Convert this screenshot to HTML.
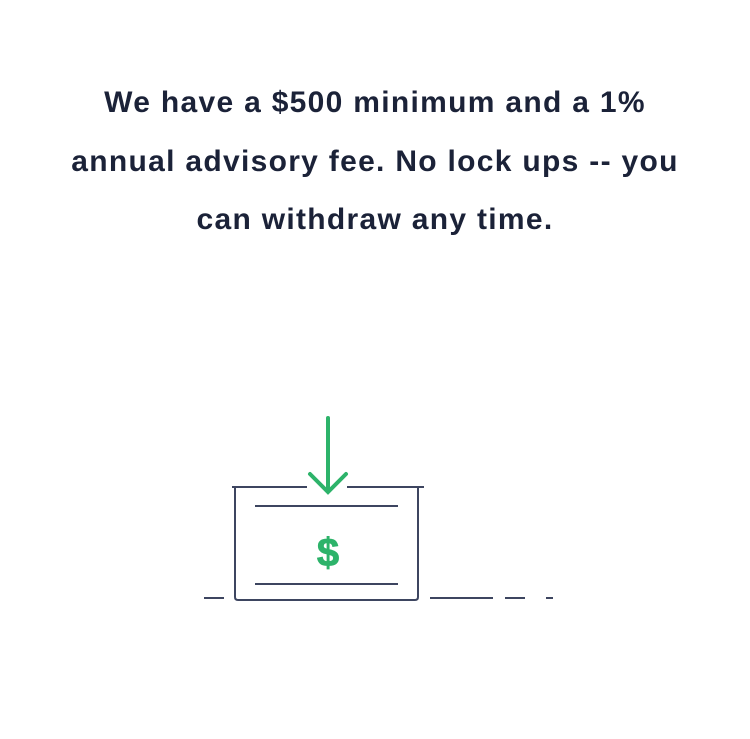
<!DOCTYPE html>
<html><head><style>
body{margin:0;width:750px;height:739px;background:#fff;overflow:hidden}
.t{position:absolute;top:74px;left:0;width:750px;text-align:center;font-family:"Liberation Sans",sans-serif;font-weight:bold;font-size:30px;letter-spacing:1.3px;line-height:58.5px;color:#1b2238}
</style></head><body>
<div class="t">We have a $500 minimum and a 1%<br>annual advisory fee. No lock ups -- you<br>can withdraw any time.</div>
<svg width="750" height="739" style="position:absolute;left:0;top:0">
<g stroke="#3d4560" stroke-width="2" fill="none">
<line x1="232" y1="487" x2="307" y2="487"/>
<line x1="347" y1="487" x2="424" y2="487"/>
<path d="M235 487 V597 Q235 600 238 600 H415 Q418 600 418 597 V487"/>
<line x1="255" y1="506" x2="398" y2="506"/>
<line x1="255" y1="584" x2="398" y2="584"/>
<line x1="204" y1="598" x2="224" y2="598"/>
<line x1="430" y1="598" x2="493" y2="598"/>
<line x1="505" y1="598" x2="525" y2="598"/>
<line x1="546" y1="598" x2="553" y2="598"/>
</g>
<g stroke="#2db36a" stroke-width="4" fill="none" stroke-linecap="round">
<line x1="328" y1="418" x2="328" y2="491"/>
<path d="M310 474 L328 492 L346 474"/>
</g>
<text x="328" y="566" text-anchor="middle" font-family="Liberation Sans,sans-serif" font-weight="bold" font-size="40" fill="#2db36a" stroke="#2db36a" stroke-width="0.8">$</text>
</svg>
</body></html>
